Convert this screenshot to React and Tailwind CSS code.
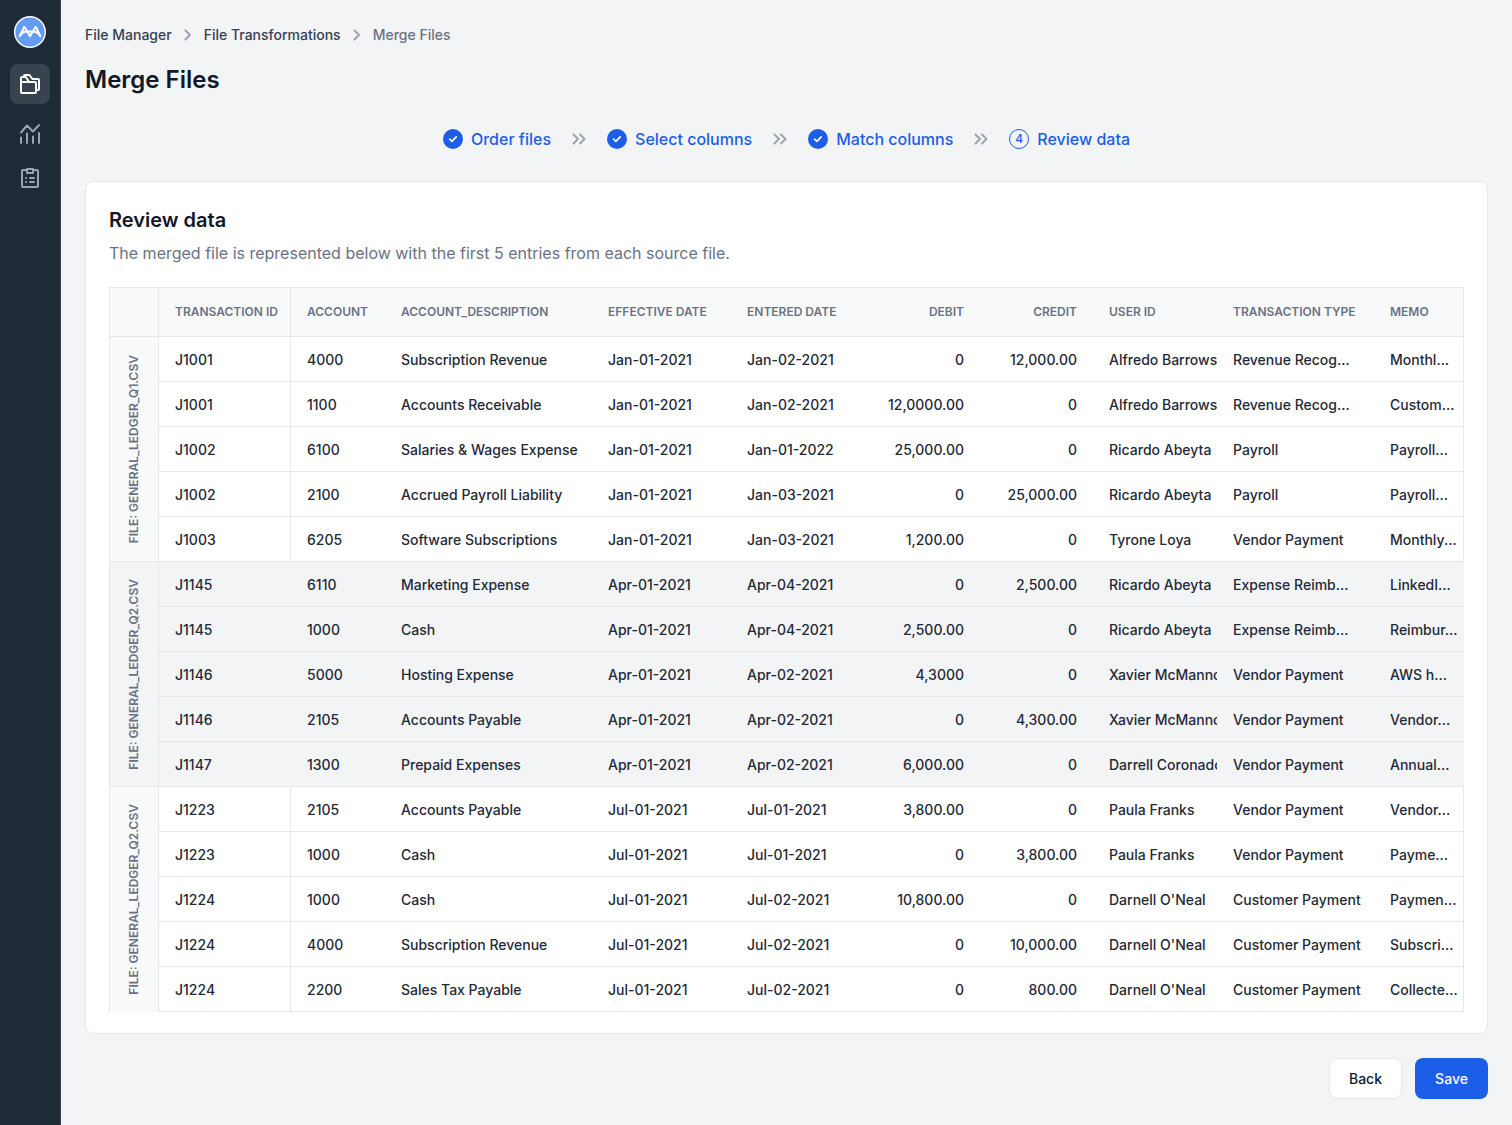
const columns = [
  { name: "Transaction ID", width: "w-[132px]" },
  { name: "Account", width: "w-[94px]" },
  { name: "Account_Description", width: "w-[207px]" },
  { name: "Effective Date", width: "w-[139px]" },
  { name: "Entered Date", width: "w-[139px]" },
  { name: "Debit", width: "w-[110px]", numeric: true },
  { name: "Credit", width: "w-[113px]", numeric: true },
  { name: "User ID", width: "w-[124px]" },
  { name: "Transaction Type", width: "w-[157px]" },
  { name: "Memo", width: "w-[90px]" },
];

const files = [
  {
    label: "File: general_ledger_Q1.csv",
    rows: [
      ["J1001", "4000", "Subscription Revenue", "Jan-01-2021", "Jan-02-2021", "0", "12,000.00", "Alfredo Barrows", "Revenue Recog...", "Monthl..."],
      ["J1001", "1100", "Accounts Receivable", "Jan-01-2021", "Jan-02-2021", "12,0000.00", "0", "Alfredo Barrows", "Revenue Recog...", "Custom..."],
      ["J1002", "6100", "Salaries & Wages Expense", "Jan-01-2021", "Jan-01-2022", "25,000.00", "0", "Ricardo Abeyta", "Payroll", "Payroll..."],
      ["J1002", "2100", "Accrued Payroll Liability", "Jan-01-2021", "Jan-03-2021", "0", "25,000.00", "Ricardo Abeyta", "Payroll", "Payroll..."],
      ["J1003", "6205", "Software Subscriptions", "Jan-01-2021", "Jan-03-2021", "1,200.00", "0", "Tyrone Loya", "Vendor Payment", "Monthly..."],
    ],
  },
  {
    label: "File: general_ledger_Q2.csv",
    shaded: true,
    rows: [
      ["J1145", "6110", "Marketing Expense", "Apr-01-2021", "Apr-04-2021", "0", "2,500.00", "Ricardo Abeyta", "Expense Reimb...", "LinkedI..."],
      ["J1145", "1000", "Cash", "Apr-01-2021", "Apr-04-2021", "2,500.00", "0", "Ricardo Abeyta", "Expense Reimb...", "Reimbur..."],
      ["J1146", "5000", "Hosting Expense", "Apr-01-2021", "Apr-02-2021", "4,3000", "0", "Xavier McMannon", "Vendor Payment", "AWS h..."],
      ["J1146", "2105", "Accounts Payable", "Apr-01-2021", "Apr-02-2021", "0", "4,300.00", "Xavier McMannon", "Vendor Payment", "Vendor..."],
      ["J1147", "1300", "Prepaid Expenses", "Apr-01-2021", "Apr-02-2021", "6,000.00", "0", "Darrell Coronado", "Vendor Payment", "Annual..."],
    ],
  },
  {
    label: "File: general_ledger_Q2.csv",
    rows: [
      ["J1223", "2105", "Accounts Payable", "Jul-01-2021", "Jul-01-2021", "3,800.00", "0", "Paula Franks", "Vendor Payment", "Vendor..."],
      ["J1223", "1000", "Cash", "Jul-01-2021", "Jul-01-2021", "0", "3,800.00", "Paula Franks", "Vendor Payment", "Payme..."],
      ["J1224", "1000", "Cash", "Jul-01-2021", "Jul-02-2021", "10,800.00", "0", "Darnell O'Neal", "Customer Payment", "Paymen..."],
      ["J1224", "4000", "Subscription Revenue", "Jul-01-2021", "Jul-02-2021", "0", "10,000.00", "Darnell O'Neal", "Customer Payment", "Subscri..."],
      ["J1224", "2200", "Sales Tax Payable", "Jul-01-2021", "Jul-02-2021", "0", "800.00", "Darnell O'Neal", "Customer Payment", "Collecte..."],
    ],
  },
];

const steps = ["Order files", "Select columns", "Match columns", "Review data"];

function Logo() {
  return (
    <svg viewBox="0 0 32 32" className="size-8" fill="none">
      <circle cx="16" cy="16" r="15.3" fill="#639bf5" stroke="#fff" strokeWidth="1.4" />
      <path
        d="M5.6 20.3 10.3 10.8 16.1 20.3 21.7 10.8 26.4 20.3M5.8 20C7.6 17 9.8 16 12.6 15.6H19.4C22.2 16 24.4 17 26.2 20"
        stroke="#fff"
        strokeWidth="2"
        strokeLinejoin="round"
        strokeLinecap="round"
      />
    </svg>
  );
}

function FoldersIcon() {
  return (
    <svg viewBox="0 0 24 24" className="size-6" fill="none" stroke="#fff" strokeWidth="2" strokeLinejoin="round">
      <path d="M3 10V6C3 5.4 3.4 5 4 5H7.9L11.2 10M3 10H17C17.6 10 18 10.4 18 11V20C18 20.6 17.6 21 17 21H4C3.4 21 3 20.6 3 20V10Z" />
      <path d="M6 5V4C6 3.4 6.4 3 7 3H11.4L14.4 7H20C20.6 7 21 7.4 21 8V17C21 17.6 20.6 18 20 18H18" />
    </svg>
  );
}

function ChartIcon() {
  return (
    <svg viewBox="0 0 24 24" className="size-6" fill="none" stroke="#9ca3af" strokeWidth="2" strokeLinecap="round" strokeLinejoin="round">
      <path d="M3 10.5 9 3.5 15 9.5 21 3M3 15.5V21M9 11.5V21M15 14.5V21M21 11V21" />
    </svg>
  );
}

function ClipboardIcon() {
  return (
    <svg viewBox="0 0 24 24" className="size-6" fill="none" stroke="#9ca3af" strokeWidth="2" strokeLinecap="round" strokeLinejoin="round">
      <path d="M15 4H19C19.6 4 20 4.4 20 5V20C20 20.6 19.6 21 19 21H5C4.4 21 4 20.6 4 20V5C4 4.4 4.4 4 5 4H9M9 3H15V7H9ZM12 12H16M12 16H16M8 12H8.1M8 16H8.1" />
    </svg>
  );
}

function Chevron() {
  return (
    <svg viewBox="0 0 8 12" className="h-3 w-2" fill="none" stroke="#9ca3af" strokeWidth="2" strokeLinecap="round" strokeLinejoin="round">
      <path d="M1.5 1.5 6 6 1.5 10.5" />
    </svg>
  );
}

function DoubleChevron() {
  return (
    <svg viewBox="0 0 14 12" className="h-3 w-3.5" fill="none" stroke="#9ca3af" strokeWidth="2" strokeLinecap="round" strokeLinejoin="round">
      <path d="M1.5 1.5 6 6 1.5 10.5M8 1.5 12.5 6 8 10.5" />
    </svg>
  );
}

function Sidebar() {
  return (
    <aside className="flex w-[61px] shrink-0 flex-col items-center border-r border-[#374151] bg-[#1f2a37] pt-4">
      <a href="#home" aria-label="Home">
        <Logo />
      </a>
      <nav className="mt-4 flex flex-col items-center gap-1">
        <a href="#files" aria-label="File manager" className="flex size-10 items-center justify-center rounded-lg bg-[#39434f]">
          <FoldersIcon />
        </a>
        <a href="#analytics" aria-label="Analytics" className="mt-1.5 flex size-10 items-center justify-center rounded-lg">
          <ChartIcon />
        </a>
        <a href="#reports" aria-label="Reports" className="flex size-10 items-center justify-center rounded-lg">
          <ClipboardIcon />
        </a>
      </nav>
    </aside>
  );
}

function Stepper() {
  return (
    <ol className="mt-[31px] flex items-center justify-center gap-[21px] text-base leading-6 font-medium text-[#1c5ee8]">
      {steps.map((step, i) => {
        const current = i === steps.length - 1;
        return (
          <li key={step} className="flex items-center gap-[21px]">
            <span className="flex items-center gap-2">
              {current ? (
                <span className="flex size-5 items-center justify-center rounded-full border border-[#1c5ee8] text-xs">{i + 1}</span>
              ) : (
                <span className="flex size-5 items-center justify-center rounded-full bg-[#1c5ee8]">
                  <svg viewBox="0 0 10 8" className="h-2 w-2.5" fill="none" stroke="#fff" strokeWidth="1.7" strokeLinecap="round" strokeLinejoin="round">
                    <path d="M1.6 4.2 3.9 6.3 8.2 1.9" />
                  </svg>
                </span>
              )}
              {step}
            </span>
            {!current && <DoubleChevron />}
          </li>
        );
      })}
    </ol>
  );
}

function LedgerTable() {
  return (
    <table className="w-full table-fixed border-separate border-spacing-0 text-left text-sm font-medium text-[#1f2a37]">
      <thead>
        <tr className="h-[50px] bg-gray-50 text-xs text-gray-500 uppercase">
          <td className="w-[50px] border border-gray-200" />
          {columns.map((col, i) => (
            <th
              key={col.name}
              scope="col"
              className={`${col.width} border-y border-gray-200 pl-4 font-semibold whitespace-nowrap ${col.numeric ? "pr-4 text-right" : ""} ${
                i === 0 || i === columns.length - 1 ? "border-r" : ""
              }`}
            >
              {col.name}
            </th>
          ))}
        </tr>
      </thead>
      {files.map((file, f) => (
        <tbody key={f} className={file.shaded ? "bg-gray-100" : "bg-white"}>
          {file.rows.map((row, r) => (
            <tr key={r} className="h-[45px]">
              {r === 0 && (
                <th
                  rowSpan={5}
                  scope="rowgroup"
                  className={`border-x border-gray-200 p-0 ${f < files.length - 1 ? "border-b" : ""} ${file.shaded ? "bg-gray-100" : "bg-gray-50"}`}
                >
                  <div className="flex items-center justify-center">
                    <span className="rotate-180 text-xs font-semibold whitespace-nowrap text-gray-500 uppercase [writing-mode:vertical-rl]">
                      {file.label}
                    </span>
                  </div>
                </th>
              )}
              {row.map((value, c) => (
                <td
                  key={c}
                  className={`border-b border-gray-200 pt-0.5 pb-0 pl-4 ${columns[c].numeric ? "pr-4 text-right" : "pr-0"} ${
                    !file.shaded && (c === 0 || c === columns.length - 1) ? "border-r" : ""
                  }`}
                >
                  <div className="overflow-hidden whitespace-nowrap">{value}</div>
                </td>
              ))}
            </tr>
          ))}
        </tbody>
      ))}
    </table>
  );
}

export default function App() {
  return (
    <div className="flex min-h-screen bg-gray-100 font-['Inter',sans-serif] text-[#111928]">
      <Sidebar />
      <main className="min-w-0 flex-1 px-6 pt-6 pb-6">
        <nav aria-label="Breadcrumb" className="flex items-center gap-3 text-sm leading-[22px] font-medium text-gray-700">
          <a href="#files">File Manager</a>
          <Chevron />
          <a href="#transformations">File Transformations</a>
          <Chevron />
          <span aria-current="page" className="text-gray-500">
            Merge Files
          </span>
        </nav>
        <h1 className="mt-[18px] text-2xl leading-8 font-semibold">Merge Files</h1>

        <Stepper />

        <section className="mt-[30px] rounded-lg border border-gray-200 bg-white px-[23px] pt-[23px] pb-[21px]">
          <h2 className="text-xl leading-[30px] font-semibold">Review data</h2>
          <p className="mt-1.5 text-base leading-6 text-gray-500">
            The merged file is represented below with the first 5 entries from each source file.
          </p>
          <div className="mt-[22px]">
            <LedgerTable />
          </div>
        </section>

        <div className="mt-6 flex justify-end gap-[13px] text-sm font-medium">
          <button type="button" className="h-[41px] w-[73px] rounded-lg border border-gray-200 bg-white">
            Back
          </button>
          <button type="button" className="h-[41px] w-[73px] rounded-lg bg-[#1c5ee8] text-white">
            Save
          </button>
        </div>
      </main>
    </div>
  );
}
